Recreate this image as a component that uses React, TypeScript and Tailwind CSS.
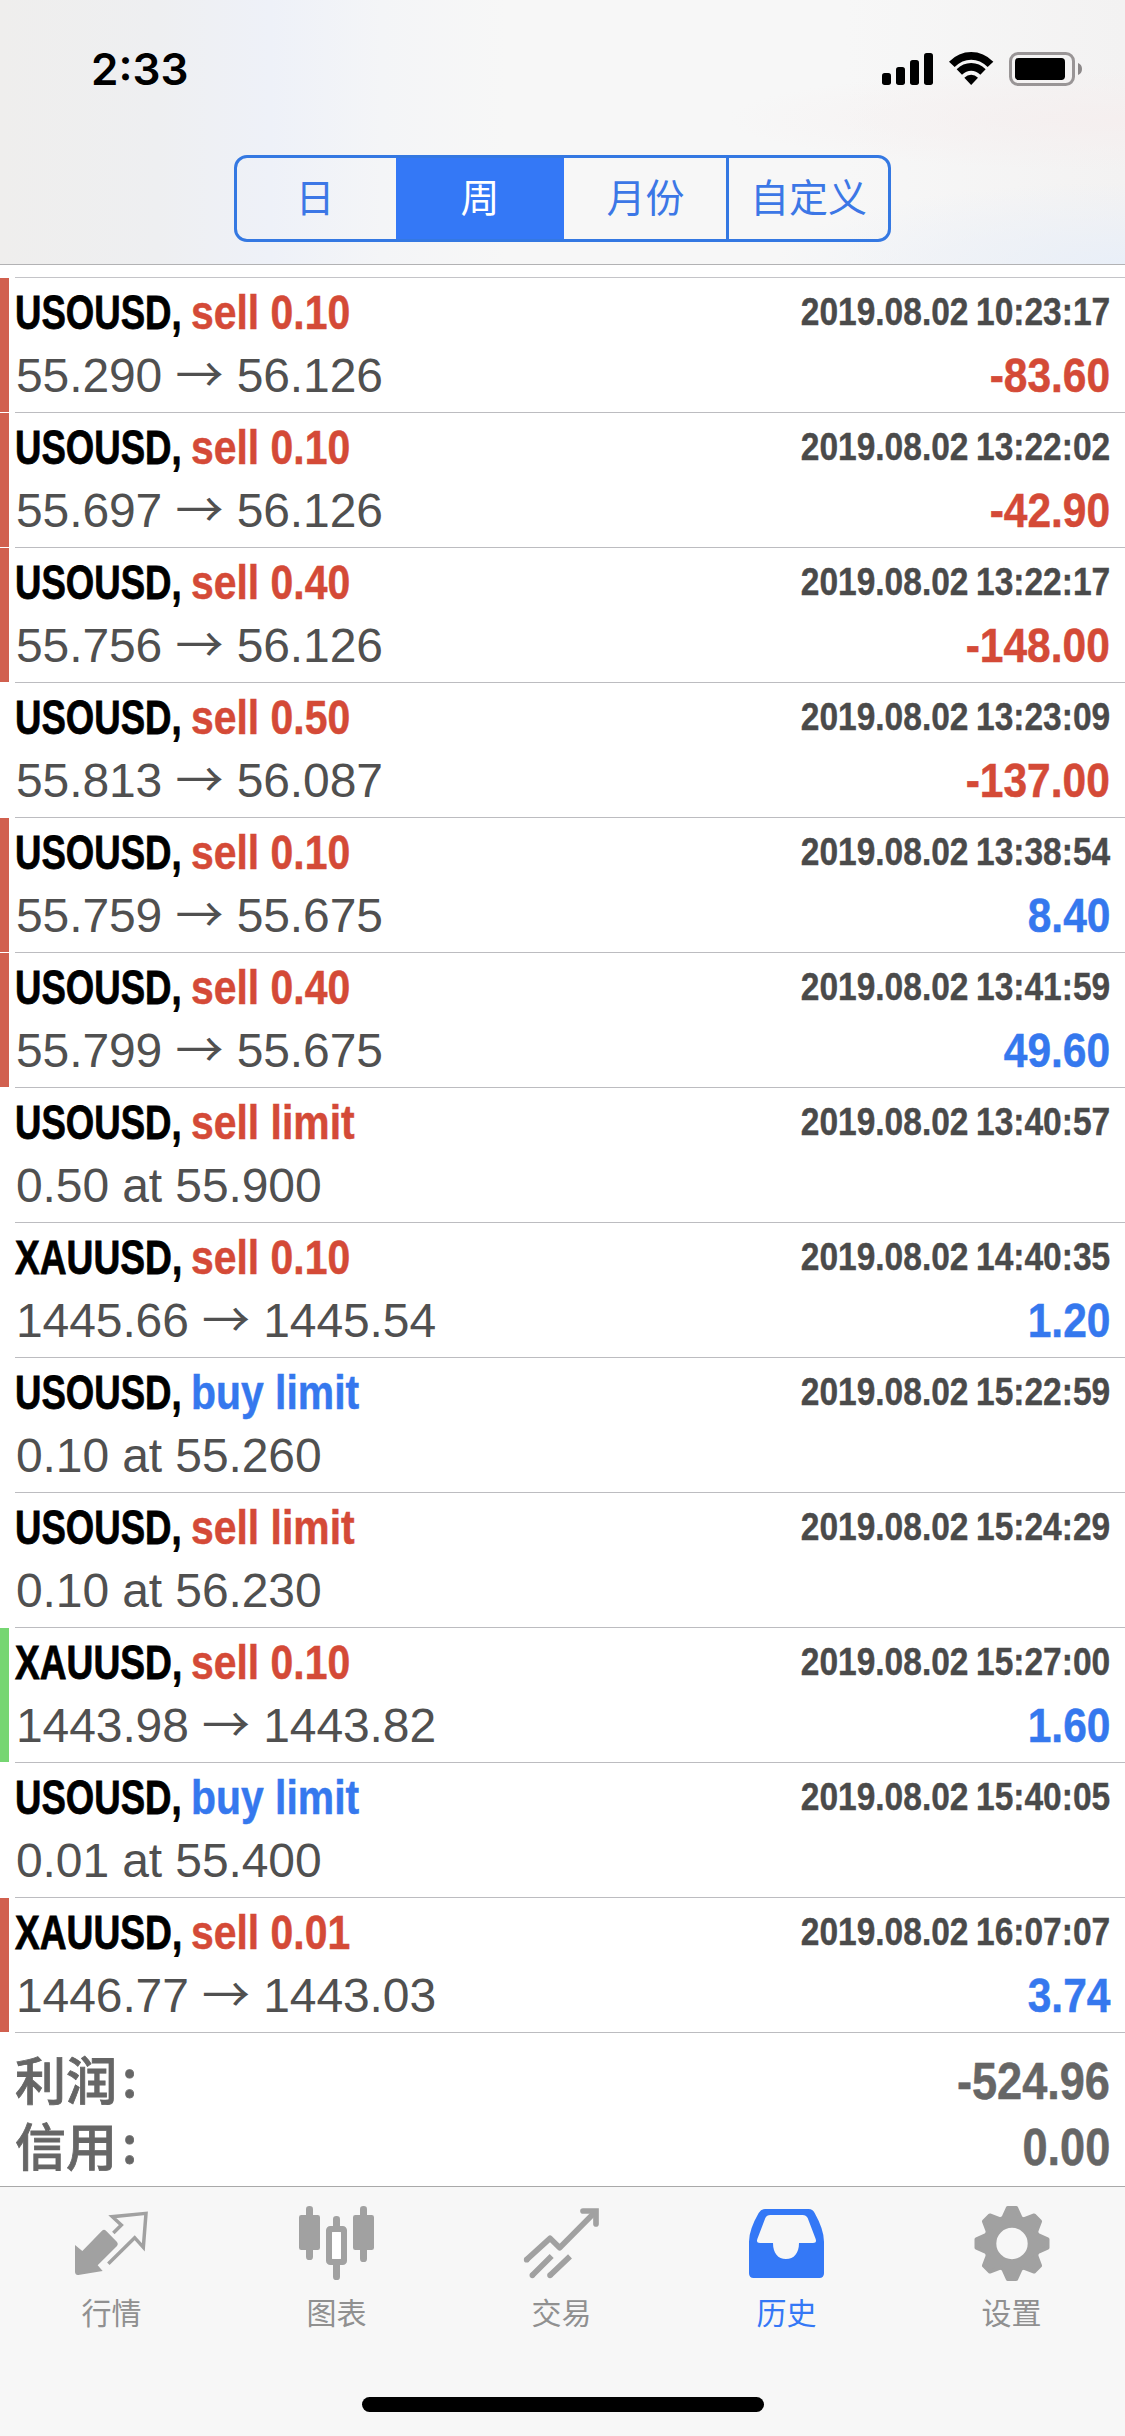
import React from "react";

type Tone = "red" | "green" | "none";
type Row = {
  symbol: string;
  action: string;
  buy?: boolean;
  time: string;
  from?: string;
  to?: string;
  note?: string;
  profit?: string;
  tone: Tone;
};

const rows: Row[] = [
  { symbol: "USOUSD,", action: "sell 0.10", time: "2019.08.02 10:23:17", from: "55.290", to: "56.126", profit: "-83.60", tone: "red" },
  { symbol: "USOUSD,", action: "sell 0.10", time: "2019.08.02 13:22:02", from: "55.697", to: "56.126", profit: "-42.90", tone: "red" },
  { symbol: "USOUSD,", action: "sell 0.40", time: "2019.08.02 13:22:17", from: "55.756", to: "56.126", profit: "-148.00", tone: "red" },
  { symbol: "USOUSD,", action: "sell 0.50", time: "2019.08.02 13:23:09", from: "55.813", to: "56.087", profit: "-137.00", tone: "none" },
  { symbol: "USOUSD,", action: "sell 0.10", time: "2019.08.02 13:38:54", from: "55.759", to: "55.675", profit: "8.40", tone: "red" },
  { symbol: "USOUSD,", action: "sell 0.40", time: "2019.08.02 13:41:59", from: "55.799", to: "55.675", profit: "49.60", tone: "red" },
  { symbol: "USOUSD,", action: "sell limit", time: "2019.08.02 13:40:57", note: "0.50 at 55.900", tone: "none" },
  { symbol: "XAUUSD,", action: "sell 0.10", time: "2019.08.02 14:40:35", from: "1445.66", to: "1445.54", profit: "1.20", tone: "none" },
  { symbol: "USOUSD,", action: "buy limit", buy: true, time: "2019.08.02 15:22:59", note: "0.10 at 55.260", tone: "none" },
  { symbol: "USOUSD,", action: "sell limit", time: "2019.08.02 15:24:29", note: "0.10 at 56.230", tone: "none" },
  { symbol: "XAUUSD,", action: "sell 0.10", time: "2019.08.02 15:27:00", from: "1443.98", to: "1443.82", profit: "1.60", tone: "green" },
  { symbol: "USOUSD,", action: "buy limit", buy: true, time: "2019.08.02 15:40:05", note: "0.01 at 55.400", tone: "none" },
  { symbol: "XAUUSD,", action: "sell 0.01", time: "2019.08.02 16:07:07", from: "1446.77", to: "1443.03", profit: "3.74", tone: "red" },
];

const toneClass: Record<Tone, string> = {
  red: "bg-[#d1604f]",
  green: "bg-[#76d672]",
  none: "bg-transparent",
};

function StatusBar() {
  return (
    <div className="flex h-[132px] items-start justify-between pr-[41px] pl-[91px] pt-[50px]">
      <div className="font-['Inter'] text-[44px] leading-[38px] font-semibold text-black">2:33</div>
      <svg className="h-[38px] w-[204px]" viewBox="90 60 612 114">
        <rect x="96" y="129" width="27" height="36" rx="8" />
        <rect x="138" y="111" width="27" height="54" rx="8" />
        <rect x="180" y="90" width="27" height="75" rx="8" />
        <rect x="222" y="69" width="27" height="96" rx="8" />
        <path d="M297 95Q326 66 363.500 66Q401 66 430 95L413 111Q391 89 363.500 89Q336 89 314 111Z" strokeLinejoin="round" />
        <path d="M320 118Q339 99 363.500 99Q388 99 407 118L391 134Q378 122 363.500 122Q349 122 336 134Z" />
        <path d="M343 143Q352 134 363.500 134Q375 134 384 143L363.500 165Z" />
        <rect x="481.500" y="70.500" width="189" height="93" rx="23" fill="none" stroke="#999596" strokeWidth="9" />
        <rect x="495" y="84" width="150" height="66" rx="11" />
        <path d="M684 99Q696 104 696 117Q696 130 684 135Z" fill="#8c8889" />
      </svg>
    </div>
  );
}

function Segments() {
  return (
    <div className="mx-auto mt-[23px] flex h-[87px] w-[657px] shrink-0 overflow-hidden rounded-[13px] border-[3px] border-[#3478e2] text-[39px] leading-[81px] text-[#3c77e6]">
      <div className="w-[159px] pr-[3px] text-center">日</div>
      <div className="-my-[3px] w-[168px] bg-[#3478f6] text-center leading-[87px] text-white">周</div>
      <div className="w-[162px] pl-px text-center">月份</div>
      <div className="flex-1 border-l-[3px] border-[#3478e2] text-center">自定义</div>
    </div>
  );
}

function HistoryRow({ row }: { row: Row }) {
  const negative = row.profit?.startsWith("-");
  const symbolScale = row.symbol.startsWith("X") ? "scale-x-[0.774]" : "scale-x-[0.762]";
  return (
    <div className="flex h-[135px]">
      <div className={`h-[134px] w-[9px] shrink-0 ${toneClass[row.tone]}`} />
      <div className="ml-[6px] flex flex-1 flex-col border-b border-[#bcbcc0] pt-[3px] pr-[15px]">
        <div className="flex h-[64px] justify-between font-bold leading-[64px]">
          <div className="flex text-[48px]">
            <span className={`w-[176px] origin-left whitespace-nowrap text-black [-webkit-text-stroke:0.8px_black] ${symbolScale}`}>
              {row.symbol}
            </span>
            <span
              className={`origin-left scale-x-[0.852] whitespace-nowrap [-webkit-text-stroke:0.5px_currentColor] ${row.buy ? "text-[#3578ee]" : "text-[#d44a37]"}`}
            >
              {row.action}
            </span>
          </div>
          <span className="-mt-px origin-right scale-x-[0.859] text-[39px] text-[#4a4a4a] [word-spacing:-2px] [-webkit-text-stroke:0.4px_currentColor]">
            {row.time}
          </span>
        </div>
        <div className="flex h-[62px] justify-between text-[48px] leading-[62px]">
          <div className="pl-px tracking-[-0.1px] whitespace-pre text-[#505050]">
            {row.note ?? (
              <>
                {row.from} <span className="font-['Noto_Sans_CJK_SC'] leading-none">→</span> {row.to}
              </>
            )}
          </div>
          {row.profit && (
            <span
              className={`origin-right scale-x-[0.885] font-bold [-webkit-text-stroke:0.5px_currentColor] ${negative ? "text-[#d44a37]" : "text-[#3578ee]"}`}
            >
              {row.profit}
            </span>
          )}
        </div>
      </div>
    </div>
  );
}

function QuotesIcon() {
  return (
    <>
      <path d="M45 150L67 168L126 107Q132 102 138 107L171 141Q176 147 171 153L113 211L128 228L55 240Q46 241 45 231Z" fill="#a1a1a1" />
      <path d="M160 114L184 90L157 65L258 55L250 157L224 128L145 206" fill="none" stroke="#a1a1a1" strokeWidth="10.500" />
    </>
  );
}

function ChartIcon() {
  return (
    <g transform="translate(-675 0)" fill="#a1a1a1">
      <rect x="717" y="60" width="63" height="105" rx="7" />
      <rect x="738" y="33" width="21" height="162" rx="10" />
      <rect x="879" y="60" width="63" height="105" rx="7" />
      <rect x="900" y="33" width="21" height="168" rx="10" />
      <rect x="819" y="63" width="21" height="40" rx="10" />
      <rect x="819" y="200" width="21" height="55" rx="10" />
      <rect x="807" y="102" width="45" height="99" rx="4" fill="none" stroke="#a1a1a1" strokeWidth="18" />
      <rect x="816" y="111" width="27" height="81" rx="8" fill="#fff" />
    </g>
  );
}

function TradeIcon() {
  return (
    <g fill="none" stroke="#a1a1a1" strokeWidth="17">
      <path d="M50 194L120 130L149 158L256 50" strokeLinejoin="round" />
      <path d="M219 48H258V87" strokeLinecap="round" />
      <path d="M67 241L125 183M120 241L180 184" />
      <path d="M50 194h.1M67 241h.1M120 241h.1" strokeLinecap="round" />
    </g>
  );
}

function HistoryIcon() {
  return (
    <path
      transform="translate(-675 0)"
      fill="#3478f6"
      fillRule="evenodd"
      d="M765 42H896Q908 42 914 54Q942 104 942 140V235Q942 249 928 249H731Q717 249 717 235V140Q717 104 746 54Q753 42 765 42ZM781 60Q770 60 766 69L742 132Q738 144 750 144H789C789 175 804 192 828 192C852 192 867 175 867 144H909Q921 144 917 132L893 69Q888 60 878 60Z"
    />
  );
}

function GearIcon() {
  return (
    <g transform="translate(156 145.500) scale(3)">
      <circle r="22.200" fill="none" stroke="#a1a1a1" strokeWidth="13" />
      {[0, 45, 90, 135, 180, 225, 270, 315].map((angle) => (
        <path
          key={angle}
          d="M-8.500 -26L-4.200 -35.500H4.200L8.500 -26Z"
          transform={`rotate(${angle})`}
          fill="#a1a1a1"
          stroke="#a1a1a1"
          strokeWidth="4"
          strokeLinejoin="round"
        />
      ))}
    </g>
  );
}

const tabs = [
  { label: "行情", icon: <QuotesIcon /> },
  { label: "图表", icon: <ChartIcon /> },
  { label: "交易", icon: <TradeIcon /> },
  { label: "历史", icon: <HistoryIcon />, active: true },
  { label: "设置", icon: <GearIcon /> },
];

export default function App() {
  return (
    <div className="flex h-[2436px] w-[1125px] flex-col overflow-hidden bg-white font-['Liberation_Sans','Noto_Sans_CJK_SC',sans-serif]">
      <header className="flex h-[265px] shrink-0 flex-col border-b border-[#b2b2b4] bg-[radial-gradient(ellipse_at_100%_100%,#e9eff8_0%,transparent_22%),radial-gradient(ellipse_at_100%_45%,#f5efef_0%,transparent_25%),linear-gradient(90deg,#efeeed_0%,#eeeff1_14%,#eef1f8_24%,#f4f5f7_34%,#f7f7f7_45%,#f7f7f7_75%,#f3f2f2_100%)]">
        <StatusBar />
        <Segments />
      </header>

      <main className="flex h-[1921px] shrink-0 flex-col">
        <div className="ml-[15px] h-[13px] shrink-0 border-b border-[#c4c4c8]" />
        {rows.map((row) => (
          <HistoryRow key={row.time} row={row} />
        ))}
        <div className="flex flex-col pt-[16px] pr-[15px] pl-[15px] font-bold text-[#666666]">
          {[
            ["利润", "-524.96"],
            ["信用", "0.00"],
          ].map(([label, value]) => (
            <div key={label} className="flex h-[66px] justify-between text-[51px] leading-[66px]">
              <span className="-mt-[4px] flex font-['Noto_Sans_CJK_SC'] font-medium [-webkit-text-stroke:0.8px_currentColor]">
                {label}
                <span className="-mt-[3px] ml-[5px]">:</span>
              </span>
              <span className="origin-right scale-x-[0.885] [-webkit-text-stroke:0.5px_currentColor]">{value}</span>
            </div>
          ))}
        </div>
      </main>

      <footer className="flex h-[250px] flex-col items-center border-t border-[#a9a9a9] bg-[#f7f7f7]">
        <nav className="flex h-[210px] w-full">
          {tabs.map((tab) => (
            <div key={tab.label} className="flex w-[225px] flex-col items-center pt-[18px] pr-[2px]">
              <svg className="h-[76px] w-[76px] overflow-visible" viewBox="42 30 228 228">
                {tab.icon}
              </svg>
              <span className={`mt-[13px] text-[30px] leading-[40px] ${tab.active ? "text-[#3478f6]" : "text-[#909090]"}`}>
                {tab.label}
              </span>
            </div>
          ))}
        </nav>
        <div className="h-[15px] w-[402px] rounded-full bg-black" />
      </footer>
    </div>
  );
}
